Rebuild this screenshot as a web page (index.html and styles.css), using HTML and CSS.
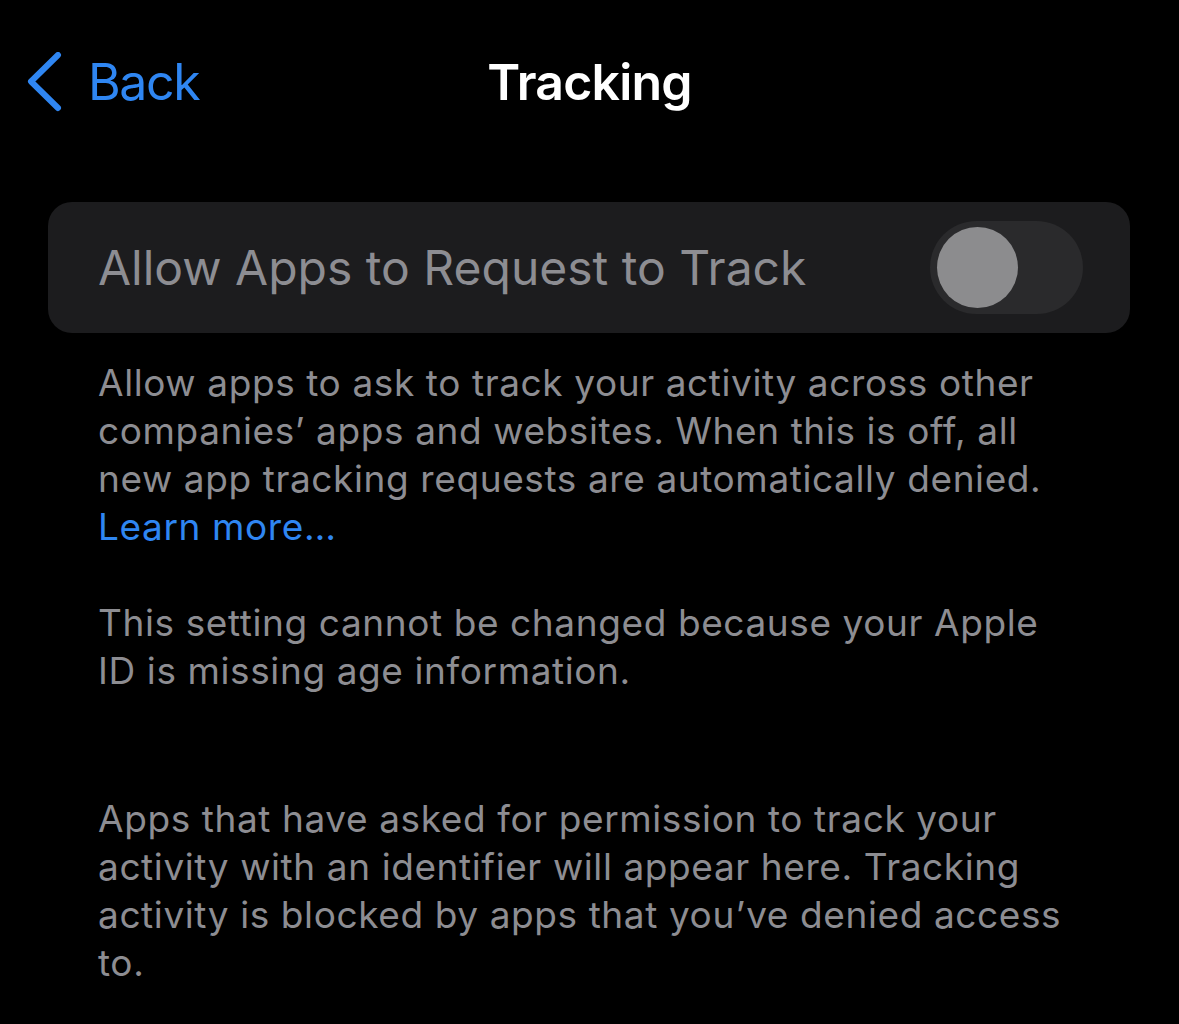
FILE: index.html
```html
<!DOCTYPE html>
<html lang="en">
<head>
<meta charset="utf-8">
<title>Tracking</title>
<link rel="stylesheet" href="styles.css">
</head>
<body>
<header class="nav">
  <a class="nav-back" href="#">
    <svg class="chevron" width="40" height="60" viewBox="0 0 40 60" aria-hidden="true">
      <path d="M32 3 L5 29.5 L32 56" fill="none" stroke="currentColor" stroke-width="6" stroke-linecap="round" stroke-linejoin="round"/>
    </svg>
    <span>Back</span>
  </a>
  <h1 class="nav-title">Tracking</h1>
  <div class="nav-spacer"></div>
</header>

<main class="content">
  <section class="card">
    <span class="card-label">Allow Apps to Request to Track</span>
    <span class="switch" role="switch" aria-checked="false" aria-disabled="true">
      <span class="switch-knob"></span>
    </span>
  </section>

  <div class="footer-notes">
    <p class="note">Allow apps to ask to track your activity across other companies’ apps and websites. When this is off, all new app tracking requests are automatically denied. <a class="link" href="#">Learn more…</a></p>
    <p class="note note-gap">This setting cannot be changed because your Apple ID is missing age information.</p>
  </div>

  <p class="note note-apps">Apps that have asked for permission to track your activity with an identifier will appear here. Tracking activity is blocked by apps that you’ve denied access to.</p>
</main>
</body>
</html>
```

FILE: styles.css
```css
* {
  box-sizing: border-box;
}

html,
body {
  margin: 0;
  background: #000;
}

body {
  width: 1179px;
  height: 1024px;
  overflow: hidden;
  font-family: Inter, "Noto Sans", "Liberation Sans", sans-serif;
  color: #fff;
  -webkit-font-smoothing: antialiased;
}

/* Navigation bar */
.nav {
  height: 164px;
  display: grid;
  grid-template-columns: 1fr auto 1fr;
  align-items: center;
  padding: 0 26px;
}

.nav-back {
  display: flex;
  align-items: center;
  gap: 22px;
  color: #2f86f2;
  text-decoration: none;
  font-size: 50px;
  font-weight: 400;
  letter-spacing: -1.4px;
}

.chevron {
  display: block;
}

.nav-title {
  margin: 0;
  font-size: 50px;
  font-weight: 600;
  letter-spacing: -0.8px;
  color: #fff;
}

/* Content */
.content {
  padding: 38px 49px 0 48px;
}

.card {
  height: 131px;
  border-radius: 24px;
  background: #1c1c1e;
  display: flex;
  align-items: center;
  justify-content: space-between;
  padding: 0 47px 0 50px;
}

.card-label {
  font-size: 48px;
  color: #8d8d92;
  letter-spacing: 0;
}

.switch {
  position: relative;
  width: 153px;
  height: 93px;
  border-radius: 47px;
  background: #2a2a2c;
  flex: none;
}

.switch-knob {
  position: absolute;
  left: 7px;
  top: 6px;
  width: 81px;
  height: 81px;
  border-radius: 50%;
  background: #8c8c8e;
}

.footer-notes {
  padding-top: 26px;
}

.note {
  margin: 0;
  padding: 0 56px 0 50px;
  font-size: 37px;
  line-height: 48px;
  color: #8d8d92;
  letter-spacing: 0.6px;
}

.note-gap {
  margin-top: 48px;
}

.note-apps {
  margin-top: 100px;
}

.link {
  color: #2f86f2;
  text-decoration: none;
}
```
